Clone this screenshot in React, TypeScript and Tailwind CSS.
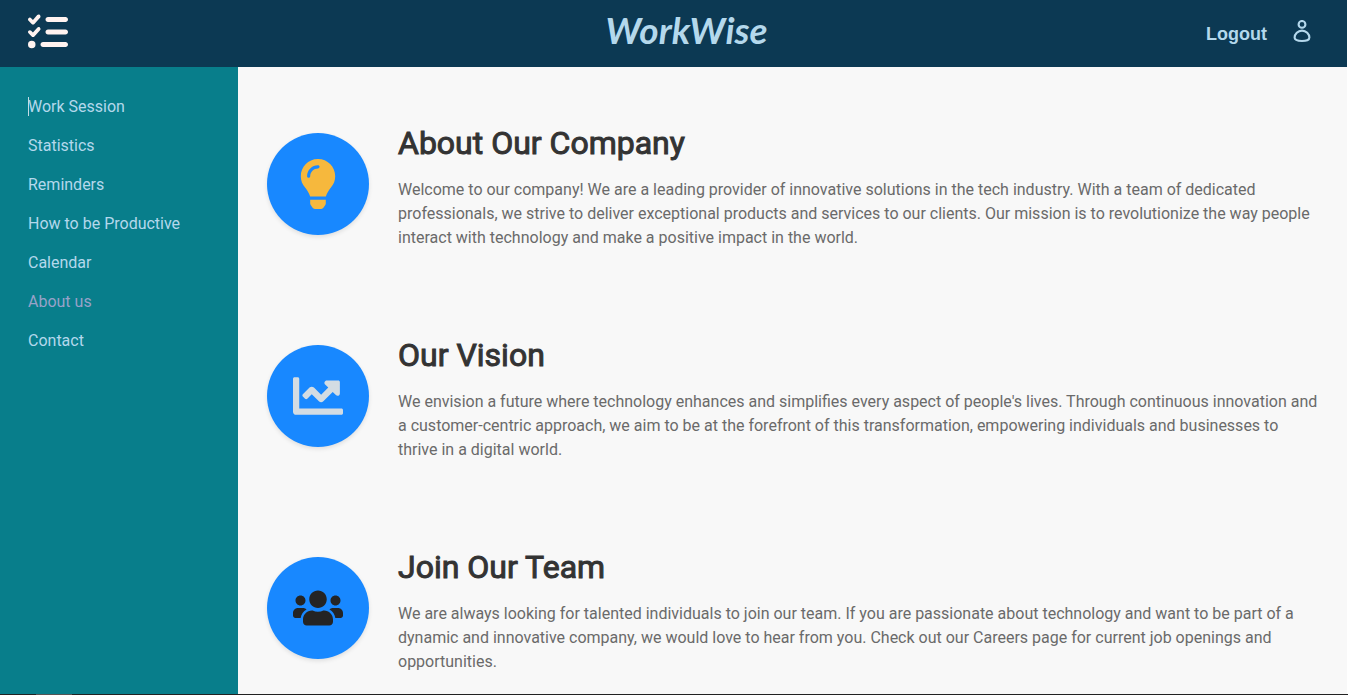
import type { ReactNode } from "react";
import { FaChartLine, FaLightbulb, FaUsers } from "react-icons/fa";
import { FaListCheck } from "react-icons/fa6";

const links = [
  "Work Session",
  "Statistics",
  "Reminders",
  "How to be Productive",
  "Calendar",
  "About us",
  "Contact",
];

function UserIcon() {
  return (
    <svg width="18" height="24" viewBox="0 0 18 24" fill="none" stroke="currentColor" strokeWidth="2.1" aria-hidden="true">
      <circle cx="9" cy="4.4" r="3.4" />
      <path d="M9 10.6C4.9 10.6 1.6 14.2 1.6 17.6C1.6 20.3 4.4 21 9 21S16.4 20.3 16.4 17.6C16.4 14.2 13.1 10.6 9 10.6Z" />
    </svg>
  );
}

function Section({ icon, title, children }: { icon: ReactNode; title: string; children: ReactNode }) {
  return (
    <section className="flex items-center gap-[29px]">
      <div className="flex size-[102px] shrink-0 items-center justify-center rounded-full bg-[#1888ff] shadow-[0_2px_4px_rgba(0,0,0,0.1)]">
        {icon}
      </div>
      <div>
        <h2 className="mb-[9px] text-[32px] leading-[52px] font-normal text-[#333] [-webkit-text-stroke:1px_#333]">
          {title}
        </h2>
        <p className="text-base leading-6 text-[#6a6a6a]">{children}</p>
      </div>
    </section>
  );
}

export default function App() {
  return (
    <div className="flex min-h-screen flex-col bg-[#f8f8f8] font-['Roboto',sans-serif]">
      <div className="flex grow flex-col border-r border-white">
        <header className="grid h-[67px] grid-cols-3 items-center bg-[#0c3953] px-7 text-[#b4d8ec]">
          <a href="#home" aria-label="Home" className="-mt-1 justify-self-start text-[#fff3f0]">
            <FaListCheck size={40} />
          </a>
          <div className="-mt-2 justify-self-center pl-[26px] font-['Lato',sans-serif] text-[37px] font-bold italic">
            WorkWise
          </div>
          <div className="flex items-center gap-[26px] justify-self-end pr-2">
            <button className="font-['Liberation_Sans',sans-serif] text-lg font-bold">Logout</button>
            <button aria-label="Profile" className="pb-1">
              <UserIcon />
            </button>
          </div>
        </header>
        <div className="flex grow">
          <nav className="w-[238px] shrink-0 bg-[#087e8b] px-7 py-[30px]">
            <ul className="flex flex-col gap-5 text-base leading-[19px]">
              {links.map((label) => (
                <li key={label} className="relative">
                  {label === "Work Session" && <span className="absolute top-0 left-0 h-[19px] w-px bg-[#c4dce6]" />}
                  <a href="#" className={label === "About us" ? "text-[#98a2c8]" : "text-[#b4d8ec]"}>
                    {label}
                  </a>
                </li>
              ))}
            </ul>
          </nav>
          <main className="flex grow flex-col gap-[79px] pt-[50px] pr-7 pb-5 pl-[29px]">
            <Section title="About Our Company" icon={<FaLightbulb size={50} className="text-[#f6b83d]" />}>
              Welcome to our company! We are a leading provider of innovative solutions in the tech industry. With a
              team of dedicated professionals, we strive to deliver exceptional products and services to our clients.
              Our mission is to revolutionize the way people interact with technology and make a positive impact in the
              world.
            </Section>
            <Section title="Our Vision" icon={<FaChartLine size={50} className="text-[#d3dce3]" />}>
              We envision a future where technology enhances and simplifies every aspect of people's lives. Through
              continuous innovation and a customer-centric approach, we aim to be at the forefront of this
              transformation, empowering individuals and businesses to thrive in a digital world.
            </Section>
            <Section title="Join Our Team" icon={<FaUsers size={50} className="text-[#242424]" />}>
              We are always looking for talented individuals to join our team. If you are passionate about technology
              and want to be part of a dynamic and innovative company, we would love to hear from you. Check out our
              Careers page for current job openings and opportunities.
            </Section>
          </main>
        </div>
      </div>
      <div className="h-px bg-[#222] pl-9">
        <div className="h-px w-9 bg-[#555]" />
      </div>
    </div>
  );
}
